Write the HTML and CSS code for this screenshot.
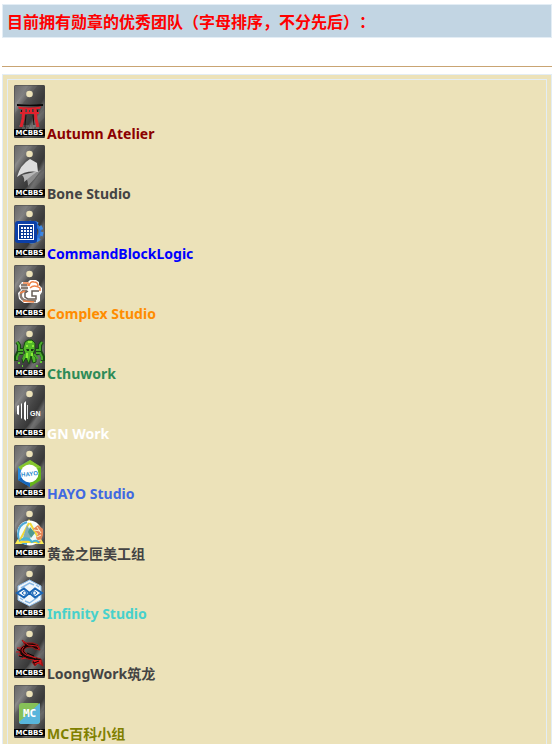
FILE: index.html
```html
<!DOCTYPE html>
<html lang="zh-CN">
<head>
<meta charset="utf-8">
<title>优秀团队</title>
<link rel="stylesheet" href="styles.css">
</head>
<body>
<svg class="defs" aria-hidden="true">
  <defs>
    <linearGradient id="metal" x1="0" y1="0" x2="1" y2="1">
      <stop offset="0" stop-color="#666"/>
      <stop offset=".22" stop-color="#808080"/>
      <stop offset=".32" stop-color="#5a5a5a"/>
      <stop offset=".48" stop-color="#444"/>
      <stop offset=".6" stop-color="#383838"/>
      <stop offset=".68" stop-color="#666"/>
      <stop offset=".8" stop-color="#4c4c4c"/>
      <stop offset="1" stop-color="#2a2a2a"/>
    </linearGradient>
    <g id="tag">
      <rect width="31" height="53" rx="1.5" fill="url(#metal)"/>
      <path d="M0 20L17 0H24L0 29ZM10 45L31 24V32L18 45Z" fill="#fff" opacity=".07"/>
      <rect x=".5" y=".5" width="30" height="52" rx="1" fill="none" stroke="#444" opacity=".5"/>
      <circle cx="15.5" cy="9" r="3.3" fill="#ece2b9"/>
      <path d="M0 44H31V51H0Z" fill="#000"/>
    </g>
  </defs>
</svg>
<main class="page">
  <h1 class="heading">目前拥有勋章的优秀团队（字母排序，不分先后）：</h1>
  <hr class="rule">
  <section class="panel">
    <ul class="teams">
      <li class="team maroon">
        <svg class="medal" viewBox="0 0 31 53" aria-hidden="true"><use href="#tag"/>
          <path d="M5 41h21M8 43h17" stroke="#929292" stroke-dasharray="3 1 1 2" opacity=".7"/>
          <path d="M4 21.5Q15 23.5 27 21.5L26 24H5Z" fill="#d9222c"/>
          <path d="M6 28H25M14 24h3v4h-3z" stroke="#e0222d" stroke-width="2" fill="none"/>
          <path d="M10 24L9 34 7 42M21 24L22 34 24 42" stroke="#e0222d" stroke-width="3" fill="none"/>
          <path d="M7.500 25v2M23.500 25v2M12 30L11 40M19 30l1 10" stroke="#1c0c0c"/>
          <path d="M3 19Q15 20.500 29 19V21H3Z" fill="#080808"/>
          <text class="tag-text" x="15.5" y="50">MCBBS</text></svg>
        <span>Autumn Atelier</span></li>
      <li class="team gray">
        <svg class="medal" viewBox="0 0 31 53" aria-hidden="true"><use href="#tag"/>
          <path d="M14 41Q14 35 11 31L27 25Q21 34 14 41Z" fill="#8b8b8b"/>
          <path d="M10 37Q11 33 8 30L24 26Q17 31 10 37Z" fill="#b7b7b7"/>
          <path d="M3 32Q6 20 16 14L23 18 24 27Q12 25 3 32Z" fill="#ddd"/>
          <text class="tag-text" x="15.5" y="50">MCBBS</text></svg>
        <span>Bone Studio</span></li>
      <li class="team blue">
        <svg class="medal" viewBox="0 0 31 53" aria-hidden="true"><use href="#tag"/>
          <circle cx="18" cy="27" r="8" fill="none" stroke="#2870d5" stroke-width="3"/>
          <circle cx="18" cy="27" r="10" fill="none" stroke="#3c88e5" stroke-width="3" stroke-dasharray="4 3"/>
          <rect x="1" y="16" width="22" height="22" rx="3" fill="#0b3fa7"/>
          <rect x="4.500" y="19.500" width="15" height="15" fill="#0a3996" stroke="#fff"/>
          <path d="M7 23h11M7 26h11M7 29h11M7 32h11" stroke="#fff" stroke-width="2" stroke-dasharray="2 1"/>
          <text class="tag-text" x="15.5" y="50">MCBBS</text></svg>
        <span>CommandBlockLogic</span></li>
      <li class="team orange">
        <svg class="medal" viewBox="0 0 31 53" aria-hidden="true"><use href="#tag"/>
          <path d="M5 21L8 17H14L16 15H22L25 17V20L28 23V27L26 30V36L23 38H10L5 34 4 28 7 25Z" fill="#fff"/>
          <path d="M7 20H13M7 23H14M13 26H9Q6 28 7 32Q9 36 15 36H22" fill="none" stroke="#887d75" stroke-width="2.500"/>
          <path d="M14 26L11 28V32L14 34H22V31H18V26H25" fill="none" stroke="#665d57" stroke-width="1.500"/>
          <path d="M9 18H14V21M15 21Q16 16 20 17Q24 17 24 21M16 23Q20 19 26 23V26M6 28L11 26M9 36L20 37" fill="none" stroke="#ee8248" stroke-width="1.500"/>
          <text class="tag-text" x="15.5" y="50">MCBBS</text></svg>
        <span>Complex Studio</span></li>
      <li class="team green">
        <svg class="medal" viewBox="0 0 31 53" aria-hidden="true"><use href="#tag"/>
          <path d="M9 25H5V20L3 17M22 25h4V20l2-3M9 28H4L2 32V36M22 28h5l2 4v4" fill="none" stroke="#174b12" stroke-width="4"/>
          <path d="M11 17L14 15H18L21 18V25L19 29 22 33V37L19 38 17 31 15 39 12 33 9 38 8 34 11 28 9 24Z" fill="#54b929" stroke="#174b12"/>
          <path d="M9 25H5V20L3 17M22 25h4V20l2-3M9 28H5L3 32V35M22 28h4l2 4v3M11 29L9 34M20 29l4 5" fill="none" stroke="#49a92b" stroke-width="2"/>
          <path d="M14 17h4M12 21h2M18 21h2M13 28v5M18 28v3" stroke="#8bed38" stroke-width="2"/>
          <path d="M12 24h3v2h-2zM17 24h3l-1 2h-2z" fill="#183c16"/>
          <path d="M4 38h2M26 37h2M8 41h1M22 41h2" stroke="#62c932" stroke-width="2"/>
          <text class="tag-text" x="15.5" y="50">MCBBS</text></svg>
        <span>Cthuwork</span></li>
      <li class="team white">
        <svg class="medal" viewBox="0 0 31 53" aria-hidden="true"><use href="#tag"/>
          <path d="M3 21l2-1v10l-2-1zM7 19l1-1v16l-1-1zM10 18l2-2v20l-2-2z" fill="#fff"/>
          <path d="M13.500 20v14" stroke="#ddd"/>
          <text class="gn-text" x="16" y="31">GN</text>
          <text class="tag-text" x="15.5" y="50">MCBBS</text></svg>
        <span>GN Work</span></li>
      <li class="team royal">
        <svg class="medal" viewBox="0 0 31 53" aria-hidden="true"><use href="#tag"/>
          <path d="M16 15L4 22V35L16 42Z" fill="#2689df"/>
          <path d="M16 15L27 22V35L16 42Z" fill="#65b51b"/>
          <path d="M4 22L16 15 27 22 23 24 16 19 7 25Z" fill="#87c72d"/>
          <path d="M4 35L8 32 16 38V42Z" fill="#1766bb"/>
          <circle cx="15.500" cy="28.500" r="9" fill="#fff"/>
          <text class="hayo-text" x="15.5" y="31" transform="rotate(-6 15.5 29)">HAYO</text>
          <text class="tag-text" x="15.5" y="50">MCBBS</text></svg>
        <span>HAYO Studio</span></li>
      <li class="team gray">
        <svg class="medal" viewBox="0 0 31 53" aria-hidden="true"><use href="#tag"/>
          <path d="M15 14L1 39H30Z" fill="#f8ec57"/>
          <circle cx="15.500" cy="28" r="11.500" fill="#eefafa" stroke="#fff" stroke-width="2"/>
          <path d="M13 17Q4 20 4 29T13 39" fill="none" stroke="#4ca9d7" stroke-width="2"/>
          <path d="M15 18L6 35M16 18L26 36M6 37H24" stroke="#f3d835" stroke-width="2"/>
          <path d="M13 20L17 27 16 36 8 36Z" fill="#82aeb6"/>
          <path d="M16 22L21 28 17 33 14 27Z" fill="#4f9a91"/>
          <path d="M19 24L24 20 29 24V30L26 38 22 33 24 29Z" fill="#e68758"/>
          <path d="M20 25l6 1M23 22l4 6M23 32l4-2M22 36l5-1" stroke="#fff2cf"/>
          <path d="M7 35Q13 31 18 37Q23 34 25 38" fill="none" stroke="#49b5d4" stroke-width="2"/>
          <text class="tag-text" x="15.5" y="50">MCBBS</text></svg>
        <span>黄金之匣美工组</span></li>
      <li class="team turquoise">
        <svg class="medal" viewBox="0 0 31 53" aria-hidden="true"><use href="#tag"/>
          <path d="M15.500 15L27 21V35L15.500 41 4 35V21Z" fill="#f2f7fb" stroke="#8dbce8"/>
          <path d="M7 23L15.500 18 20 20M24 32L15.500 38 11 36M22 20l3 2M6 33l3 2" fill="none" stroke="#8ab9e5" stroke-width="1.500"/>
          <path d="M3 28L10 23.500 21 32.500 28 28 21 23.500 10 32.500Z" fill="none" stroke="#1764b5" stroke-width="2"/>
          <path d="M8 28l2.500-2 2.500 2-2.500 2zM18 28l2.500-2 2.500 2-2.500 2z" fill="#f2f7fb" stroke="#1764b5"/>
          <text class="tag-text" x="15.5" y="50">MCBBS</text></svg>
        <span>Infinity Studio</span></li>
      <li class="team gray">
        <svg class="medal" viewBox="0 0 31 53" aria-hidden="true"><use href="#tag"/>
          <path d="M8 15L12 18 19 18 24 20 26 25 21 24 18 22Q10 22 10 26Q12 30 20 32L27 34 29 41 24 38 21 41 18 37 20 35Q9 34 6 29Q4 23 11 20Z" fill="#160707" stroke="#9e1717"/>
          <path d="M9 16L14 20 23 21 25 24M3 23L7 23M2 27L6 27M4 30L8 31M7 34L12 33M10 22Q5 26 12 30L22 33" fill="none" stroke="#d31a1f"/>
          <path d="M19 35L27 35 28 40 24 38 21 40Z" fill="#d31a1f"/>
          <path d="M3 24L6 26M5 31L9 32M13 28L20 31M20 38L25 36" stroke="#080505"/>
          <text class="tag-text" x="15.5" y="50">MCBBS</text></svg>
        <span>LoongWork筑龙</span></li>
      <li class="team olive">
        <svg class="medal" viewBox="0 0 31 53" aria-hidden="true"><use href="#tag"/>
          <rect x="5" y="18" width="21" height="21" rx="3" fill="#86c158"/>
          <path d="M26 18V36Q26 39 23 39H8Q5 39 5 37Z" fill="#58b5dc"/>
          <text class="mc-text" x="15.5" y="32">MC</text>
          <text class="tag-text" x="15.5" y="50">MCBBS</text></svg>
        <span>MC百科小组</span></li>
    </ul>
  </section>
</main>
</body>
</html>
```
FILE: styles.css
```css
* { box-sizing: border-box; }

body {
  margin: 0;
  background: #fff;
  color: #444;
  font-family: "Noto Sans", "Noto Sans CJK SC", sans-serif;
}

.defs { position: absolute; width: 0; height: 0; }

.page {
  height: 100vh;
  padding: 4px 0 0 2px;
  overflow: hidden;
}

.heading {
  margin: 0;
  padding: 4px;
  border: 1px solid #e3edf5;
  background: #c2d5e3;
  color: #f00;
  font-family: "Noto Sans CJK SC", sans-serif;
  font-size: 16px;
  line-height: 24px;
  text-spacing-trim: space-all;
}

.rule {
  height: 1px;
  margin: 28px 0 7px;
  border: 0;
  background: #c9a473;
}

.panel {
  padding: 4px;
  border: 1px solid #e3edf5;
  background: #ece2b9;
}

.teams {
  margin: 0;
  padding: 5px 6px;
  border: 1px solid #e3edf5;
  list-style: none;
}

.team {
  display: flex;
  align-items: flex-start;
  gap: 2px;
  height: 60px;
  font-size: 14px;
  font-weight: 700;
  line-height: 20px;
}

.team span { margin-top: 39px; }

.medal { flex: none; width: 31px; height: 53px; }

.tag-text {
  fill: #fff;
  font: bold 7px "DejaVu Sans", sans-serif;
  text-anchor: middle;
}

.gn-text { fill: #fff; font: bold 7px "Liberation Sans", sans-serif; }

.hayo-text {
  fill: #2687cb;
  font: bold 6px "Liberation Sans", sans-serif;
  text-anchor: middle;
}

.mc-text {
  fill: #fff;
  font: bold 11px "DejaVu Sans Mono", monospace;
  text-anchor: middle;
}

.maroon { color: #8b0000; }
.gray { color: #444; }
.blue { color: #00f; }
.orange { color: #ff8c00; }
.green { color: #2e8b57; }
.white { color: #fff; }
.royal { color: #4169e1; }
.turquoise { color: #48d1cc; }
.olive { color: #808000; }
```
